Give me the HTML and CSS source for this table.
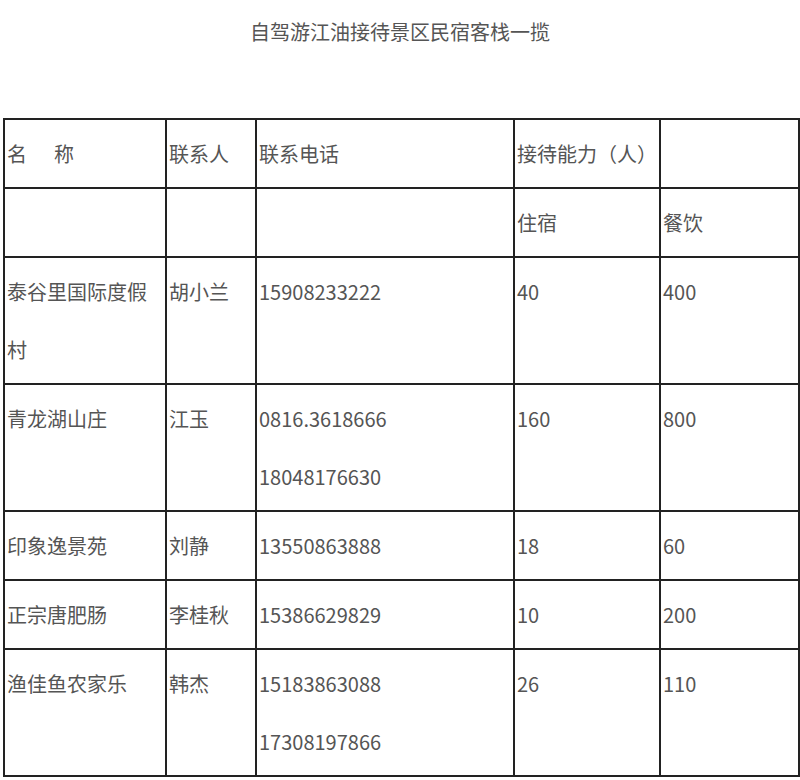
FILE: index.html
```html
<!DOCTYPE html>
<html lang="zh-CN">
<head>
<meta charset="utf-8">
<title>自驾游江油接待景区民宿客栈一揽</title>
<link rel="stylesheet" href="styles.css">
</head>
<body>
<h1 class="title">自驾游江油接待景区民宿客栈一揽</h1>
<table class="inns">
  <colgroup>
    <col class="c-name">
    <col class="c-contact">
    <col class="c-phone">
    <col class="c-stay">
    <col class="c-food">
  </colgroup>
  <tr>
    <td>名<span class="gap"></span>称</td>
    <td>联系人</td>
    <td>联系电话</td>
    <td>接待能力（人）</td>
    <td></td>
  </tr>
  <tr>
    <td></td>
    <td></td>
    <td></td>
    <td>住宿</td>
    <td>餐饮</td>
  </tr>
  <tr>
    <td>泰谷里国际度假村</td>
    <td>胡小兰</td>
    <td>15908233222</td>
    <td>40</td>
    <td>400</td>
  </tr>
  <tr>
    <td>青龙湖山庄</td>
    <td>江玉</td>
    <td>0816.3618666<br>18048176630</td>
    <td>160</td>
    <td>800</td>
  </tr>
  <tr>
    <td>印象逸景苑</td>
    <td>刘静</td>
    <td>13550863888</td>
    <td>18</td>
    <td>60</td>
  </tr>
  <tr>
    <td>正宗唐肥肠</td>
    <td>李桂秋</td>
    <td>15386629829</td>
    <td>10</td>
    <td>200</td>
  </tr>
  <tr>
    <td>渔佳鱼农家乐</td>
    <td>韩杰</td>
    <td>15183863088<br>17308197866</td>
    <td>26</td>
    <td>110</td>
  </tr>
</table>
</body>
</html>
```
FILE: styles.css
```css
html, body {
  margin: 0;
  padding: 0;
  background: #fff;
}
body {
  font-family: "Noto Sans CJK SC", "Noto Sans", sans-serif;
  color: #555;
}
.title {
  margin: 0 0 76px 0;
  padding-top: 22px;
  font-size: 20px;
  line-height: 20px;
  font-weight: normal;
  text-align: center;
  color: #555;
}
.inns {
  margin-left: 3px;
  width: 795px;
  border-collapse: collapse;
  table-layout: fixed;
  font-size: 20px;
  line-height: 58px;
}
.inns td {
  border: 2px solid #222;
  padding: 5px 3px 4px 2px;
  vertical-align: top;
  text-align: left;
  word-break: break-all;
}
.c-name { width: 162px; }
.c-contact { width: 90px; }
.c-phone { width: 258px; }
.c-stay { width: 146px; }
.c-food { width: 139px; }
.gap {
  display: inline-block;
  width: 27px;
}
```
